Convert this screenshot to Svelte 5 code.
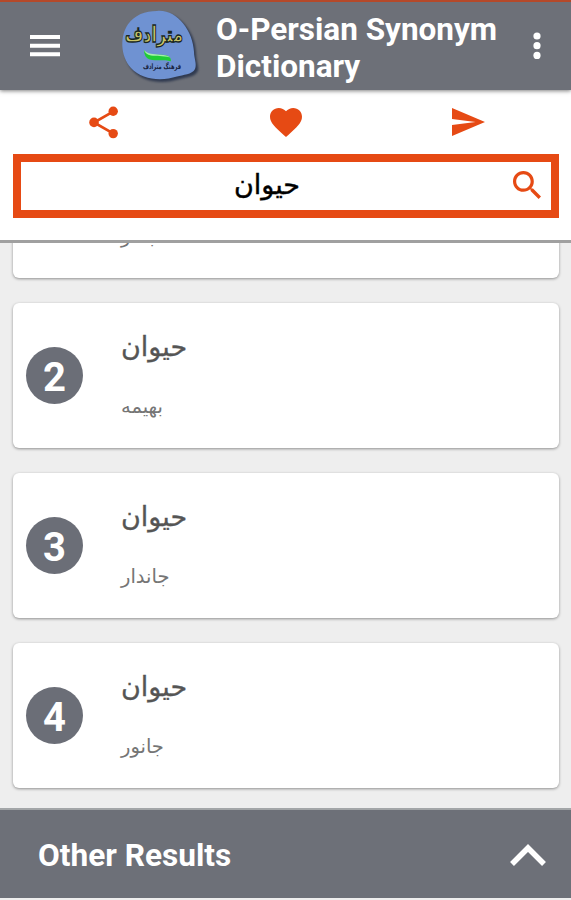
<script lang="ts">
    const query = 'حیوان';
    const results = [
        { id: 1, word: 'حیوان', synonym: 'بشر' },
        { id: 2, word: 'حیوان', synonym: 'بهیمه' },
        { id: 3, word: 'حیوان', synonym: 'جاندار' },
        { id: 4, word: 'حیوان', synonym: 'جانور' },
    ];
</script>

<div class="app">
    <header>
        <button class="menu" aria-label="Menu">
            <svg width="30" height="22" viewBox="0 0 30 22">
                <path d="M0 0h30v4H0zM0 8.7h30v4H0zM0 17.2h30v4H0z" fill="#fff" />
            </svg>
        </button>
        <svg class="logo" width="80" height="76" viewBox="0 0 80 80" preserveAspectRatio="none">
            <path class="shade" d="M38 3C58 1 75 24 75 46c0 7 3 13 2 18-3 7-13 7-19 9-15 5-35 4-46-9C1 51 1 29 9 17 16 7 26 3 38 3z" />
            <path d="M36 1C56-1 72 22 73 44c0 7 3 13 1 18-3 6-12 6-18 8-15 5-35 4-46-9C-1 48-1 27 7 15 14 5 24 1 36 1z" fill="#6f92d2" />
            <text class="name" x="33" y="34" text-anchor="middle" textLength="58" lengthAdjust="spacingAndGlyphs">مترادف</text>
            <path d="M23 42c3 5 8 5 15 5 8 0 12 1 12 7-7-2-15 0-21-2-4-1-6-5-6-10z" fill="#20cd36" />
            <path d="M23 42c4 5 9 4 16 5 5 0 8 1 10 3-7-2-14-1-19-2-4-1-6-3-7-6z" fill="#a6efaa" />
            <text class="tag" x="41" y="62" text-anchor="middle" textLength="38" lengthAdjust="spacingAndGlyphs">فرهنگ مترادف</text>
        </svg>
        <h1>O-Persian Synonym Dictionary</h1>
        <button class="more" aria-label="More">
            <svg width="8" height="28" viewBox="0 0 8 28" fill="#fff">
                <circle cx="4" cy="4" r="3.6" />
                <circle cx="4" cy="13.7" r="3.6" />
                <circle cx="4" cy="23.4" r="3.6" />
            </svg>
        </button>
    </header>

    <section class="tools">
        <div class="actions">
            <button aria-label="Share">
                <svg width="30" height="33" viewBox="0 0 30 33">
                    <path d="M24.5 5.3 5 16.5l19.5 11.2" fill="none" stroke="#e64a14" stroke-width="2.7" />
                    <g fill="#e64a14">
                        <circle cx="24.2" cy="5.2" r="4.7" />
                        <circle cx="5" cy="16.4" r="4.8" />
                        <circle cx="24.2" cy="27.6" r="4.7" />
                    </g>
                </svg>
            </button>
            <button aria-label="Favorite">
                <svg width="32" height="29" viewBox="2 3 20 18.35" preserveAspectRatio="none">
                    <path d="M12 21.35l-1.45-1.32C5.4 15.36 2 12.28 2 8.5 2 5.42 4.42 3 7.5 3c1.74 0 3.41.81 4.5 2.09C13.09 3.81 14.76 3 16.5 3 19.58 3 22 5.42 22 8.5c0 3.78-3.4 6.86-8.55 11.54L12 21.35z" fill="#e64a14" />
                </svg>
            </button>
            <button aria-label="Send">
                <svg width="33" height="28" viewBox="2 3 21 18" preserveAspectRatio="none">
                    <path d="M2.01 21L23 12 2.01 3 2 10l15 2-15 2z" fill="#e64a14" />
                </svg>
            </button>
        </div>
        <div class="search">
            <span class="query" dir="rtl">{query}</span>
            <svg width="28" height="28" viewBox="3 3 17.49 17.49">
                <path d="M15.5 14h-.79l-.28-.27C15.41 12.59 16 11.11 16 9.5 16 5.91 13.09 3 9.5 3S3 5.91 3 9.5 5.91 16 9.5 16c1.61 0 3.09-.59 4.23-1.57l.27.28v.79l5 4.99L20.49 19l-4.99-5zm-6 0C7.01 14 5 11.99 5 9.5S7.01 5 9.5 5 14 7.01 14 9.5 11.99 14 9.5 14z" fill="#e64a14" />
            </svg>
        </div>
    </section>

    <main>
        {#each results as item (item.id)}
            <article>
                <div class="badge">{item.id}</div>
                <div class="entry">
                    <div class="word" dir="rtl">{item.word}</div>
                    <div class="synonym" dir="rtl">{item.synonym}</div>
                </div>
            </article>
        {/each}
    </main>

    <footer>
        <span>Other Results</span>
        <svg width="36" height="23" viewBox="0 0 36 23">
            <path d="M2 20 18 4l16 16" fill="none" stroke="#fff" stroke-width="5.5" />
        </svg>
    </footer>
</div>

<style>
    :global(body) {
        margin: 0;
    }

    .app {
        display: flex;
        flex-direction: column;
        box-sizing: border-box;
        width: 571px;
        height: 900px;
        padding-bottom: 2px;
        overflow: hidden;
        background: #eee;
        font-family: Roboto, 'DejaVu Sans', sans-serif;
    }

    button {
        display: flex;
        padding: 0;
        border: 0;
        background: none;
    }

    svg {
        display: block;
        flex: none;
    }

    header {
        position: relative;
        z-index: 1;
        display: flex;
        flex: none;
        align-items: center;
        box-sizing: border-box;
        height: 90px;
        padding: 0 30px;
        border-top: 2px solid #b5492a;
        background: #6d7078;
        box-shadow: 0 1px 4px rgba(0, 0, 0, 0.5);
    }

    .logo {
        margin: 3px -1px 0 61px;
        overflow: visible;
    }

    .shade {
        fill: #303a50;
        filter: blur(1px);
    }

    .name {
        font: bold 23px 'DejaVu Sans', sans-serif;
        fill: #c9c56a;
        stroke: #17261f;
        stroke-width: 1.4px;
    }

    .tag {
        font: bold 8px 'DejaVu Sans', sans-serif;
        fill: #17233f;
    }

    h1 {
        width: 300px;
        margin: 0 0 0 16px;
        padding-top: 4px;
        color: #fff;
        font-size: 31.5px;
        font-weight: 700;
        line-height: 37px;
    }

    .more {
        margin-left: auto;
    }

    .tools {
        flex: none;
        box-sizing: border-box;
        height: 153px;
        padding: 0 12px 0 13px;
        border-bottom: 3px solid #a0a0a0;
        background: #fff;
    }

    .actions {
        display: flex;
        height: 64px;
    }

    .actions button {
        flex: 1;
        align-items: center;
        justify-content: center;
    }

    .search {
        display: flex;
        align-items: center;
        box-sizing: border-box;
        height: 64px;
        padding: 0 10px 2px 0;
        border: 8px solid #e64a14;
    }

    .query {
        flex: 1;
        color: #000;
        font-size: 27px;
        line-height: 40px;
        text-align: center;
        -webkit-text-stroke: 0.4px #000;
    }

    main {
        display: flex;
        flex: 1;
        flex-direction: column;
        justify-content: flex-end;
        gap: 25px;
        min-height: 0;
        padding: 0 12px 20px 13px;
        overflow: hidden;
    }

    article {
        display: flex;
        flex: none;
        align-items: center;
        box-sizing: border-box;
        height: 145px;
        padding: 0 13px;
        border-radius: 6px;
        background: #fff;
        box-shadow: 0 1px 3px rgba(0, 0, 0, 0.4);
    }

    .badge {
        width: 57px;
        height: 57px;
        border-radius: 50%;
        background: #6b6e77;
        color: #fff;
        font-size: 40px;
        font-weight: 700;
        line-height: 62px;
        text-align: center;
    }

    .entry {
        display: flex;
        flex-direction: column;
        align-items: flex-start;
        gap: 20px;
        padding-top: 3px;
        margin-left: 38px;
    }

    .word {
        color: #555;
        font-size: 27px;
        line-height: 40px;
        -webkit-text-stroke: 0.3px #555;
    }

    .synonym {
        color: #757575;
        font-size: 19.5px;
        line-height: 40px;
    }

    footer {
        display: flex;
        flex: none;
        align-items: center;
        justify-content: space-between;
        box-sizing: border-box;
        height: 90px;
        padding: 2px 25px 0 38px;
        border-top: 2px solid #a3a6a8;
        background: #6d7078;
        color: #fff;
        font-size: 31.6px;
        font-weight: 700;
    }
</style>
